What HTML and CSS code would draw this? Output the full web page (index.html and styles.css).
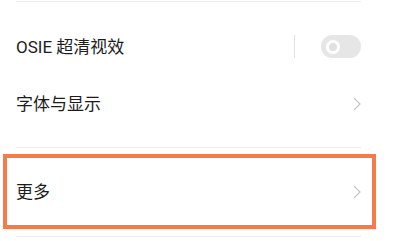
FILE: index.html
```html
<!DOCTYPE html>
<html>
<head>
<meta charset="utf-8">
<link rel="stylesheet" href="styles.css">
</head>
<body>
<div class="list">
  <div class="divider top"></div>
  <div class="group">
    <div class="row">
      <span class="label">OSIE 超清视效</span>
      <div class="controls">
        <span class="vline"></span>
        <span class="toggle"><span class="knob"></span></span>
      </div>
    </div>
    <div class="row">
      <span class="label">字体与显示</span>
      <svg class="chev" width="8" height="14" viewBox="0 0 8 14"><polyline points="1,1 7,7 1,13" fill="none" stroke="#c4c4c4" stroke-width="1.1"/></svg>
    </div>
  </div>
  <div class="divider"></div>
  <div class="row tall">
    <span class="label">更多</span>
    <svg class="chev" width="8" height="14" viewBox="0 0 8 14"><polyline points="1,1 7,7 1,13" fill="none" stroke="#c4c4c4" stroke-width="1.1"/></svg>
  </div>
  <div class="divider"></div>
</div>
<div class="highlight"></div>
</body>
</html>
```
FILE: styles.css
```css
html, body {
  margin: 0;
  padding: 0;
  background: #ffffff;
}
body {
  position: relative;
  width: 399px;
  height: 241px;
  overflow: hidden;
  font-family: "Roboto", "Noto Sans CJK SC", sans-serif;
  color: #1c1c1c;
}
.list {
  margin-left: 16px;
  width: 345px;
}
.divider {
  height: 1px;
  background: #ececec;
}
.divider.top {
  margin-top: 1px;
}
.group {
  padding: 16px 0 15px;
}
.row {
  height: 57px;
  display: flex;
  align-items: center;
  justify-content: space-between;
}
.row.tall {
  height: 88px;
}
.label {
  font-size: 17px;
  line-height: 20px;
}
.controls {
  display: flex;
  align-items: center;
  gap: 26px;
}
.vline {
  width: 1px;
  height: 23px;
  background: #e2e2e2;
}
.toggle {
  width: 40px;
  height: 23px;
  border-radius: 12px;
  background: #e6e6e6;
  display: flex;
  align-items: center;
  padding-left: 5px;
  box-sizing: border-box;
}
.knob {
  width: 14px;
  height: 14px;
  border-radius: 50%;
  box-sizing: border-box;
  border: 3.5px solid #ffffff;
  background: #e0e0e0;
}
.chev {
  display: block;
}
.highlight {
  position: absolute;
  left: 3px;
  top: 154px;
  width: 373px;
  height: 75px;
  box-sizing: border-box;
  border: 4px solid #f77a4b;
}
```
